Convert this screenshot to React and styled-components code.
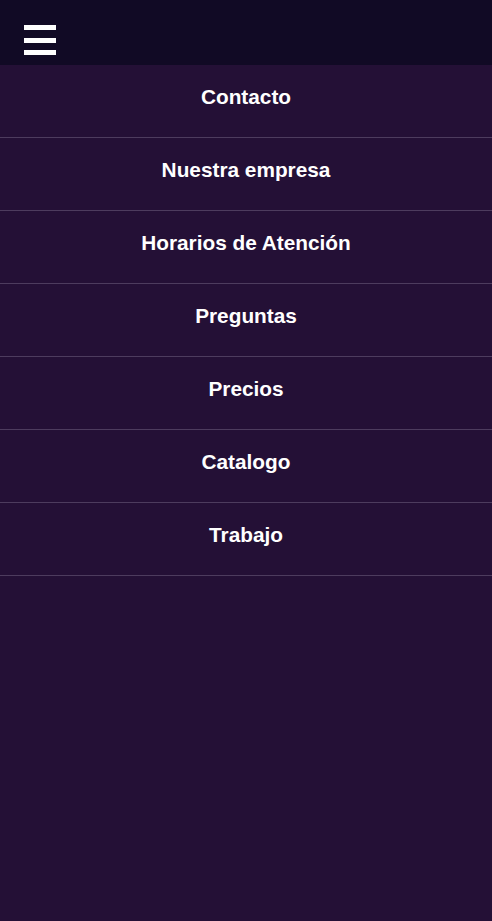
import React from "react";
import styled, { createGlobalStyle } from "styled-components";

const Global = createGlobalStyle`
  html, body { margin: 0; padding: 0; background: #241036; }
  body { font-family: "Liberation Sans", Arial, sans-serif; }
`;

const Page = styled.div`
  min-height: 921px;
  background: #241036;
`;

const Header = styled.header`
  height: 65px;
  background: #110a25;
  display: flex;
  align-items: flex-start;
  padding: 25px 0 0 24px;
  box-sizing: border-box;
`;

const Burger = styled.button`
  display: flex;
  flex-direction: column;
  gap: 7.5px;
  padding: 0;
  margin: 0;
  background: none;
  border: none;
  cursor: pointer;
`;

const Bar = styled.span`
  display: block;
  width: 32px;
  height: 5px;
  background: #ffffff;
`;

const Menu = styled.nav`
  display: flex;
  flex-direction: column;
`;

const Item = styled.a`
  height: 73px;
  box-sizing: border-box;
  padding-bottom: 8px;
  display: flex;
  align-items: center;
  justify-content: center;
  border-bottom: 1px solid #4d3c5e;
  color: #ffffff;
  font-weight: bold;
  font-size: 20.8px;
  text-decoration: none;
`;

const items = [
  "Contacto",
  "Nuestra empresa",
  "Horarios de Atención",
  "Preguntas",
  "Precios",
  "Catalogo",
  "Trabajo",
];

export default function App() {
  return (
    <Page>
      <Global />
      <Header>
        <Burger aria-label="menu">
          <Bar />
          <Bar />
          <Bar />
        </Burger>
      </Header>
      <Menu>
        {items.map((t) => (
          <Item key={t} href="#">{t}</Item>
        ))}
      </Menu>
    </Page>
  );
}
